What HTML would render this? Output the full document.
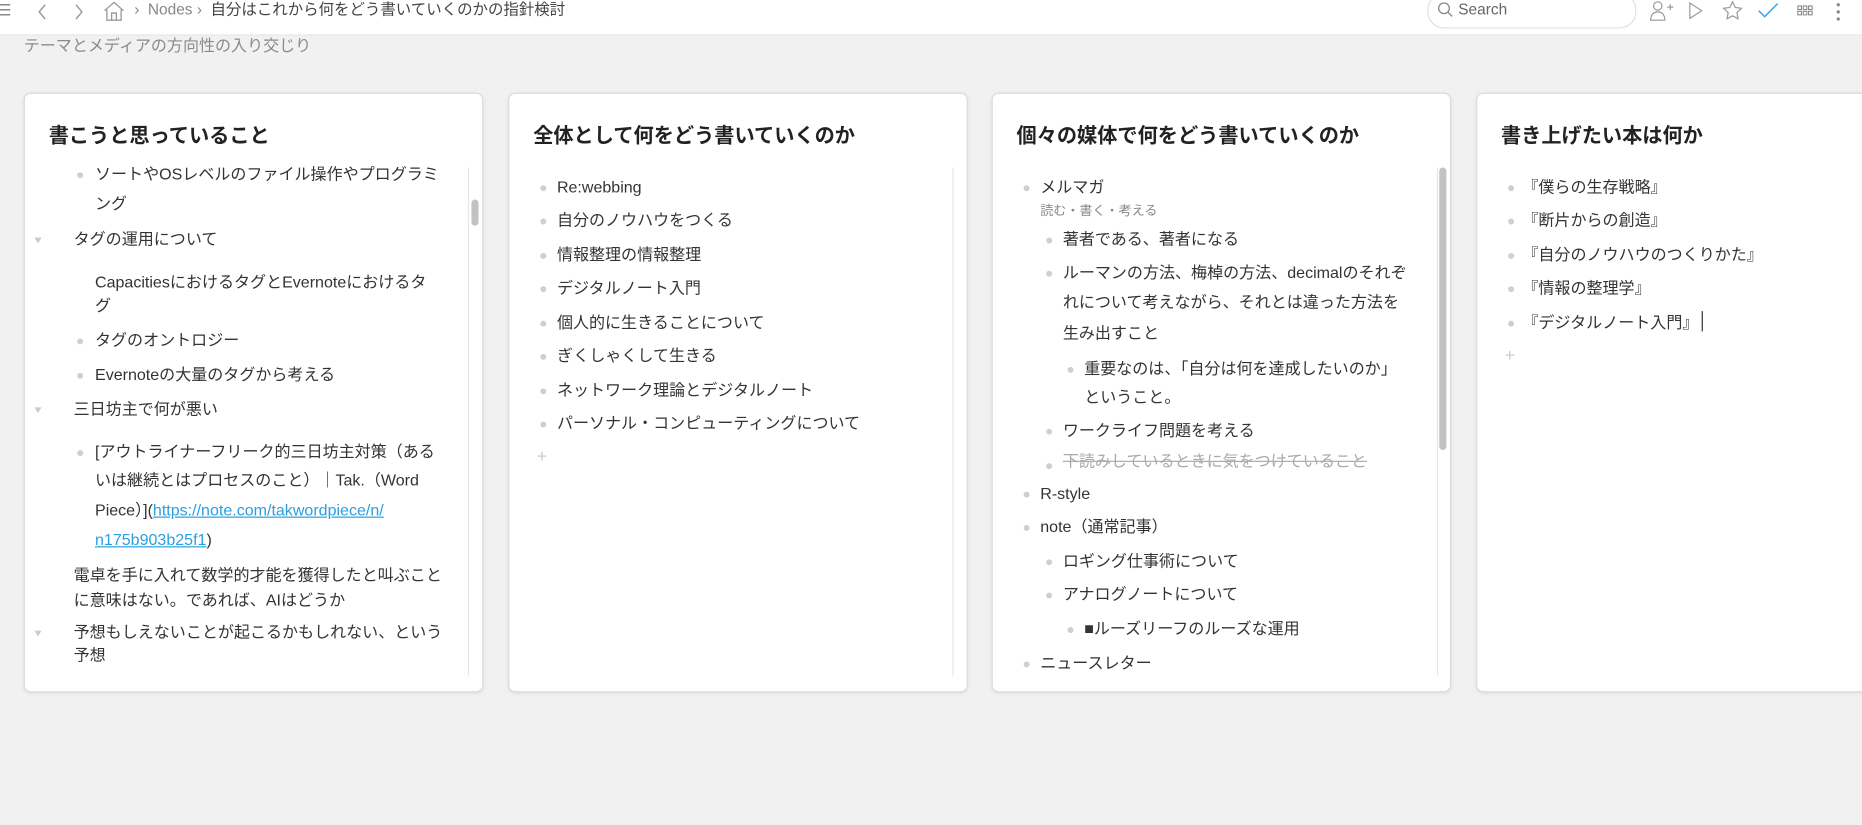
<!DOCTYPE html>
<html><head><meta charset="utf-8"><style>
html,body{margin:0;padding:0;width:1862px;height:825px;overflow:hidden;background:#f0f1f0;}
#s{position:absolute;left:0;top:0;width:1568px;height:695px;transform:scale(1.18750);transform-origin:0 0;font-family:"Liberation Sans","Noto Sans CJK JP",sans-serif;color:#333;}
.hdr{position:absolute;left:0;top:0;width:1568px;height:29px;background:#fff;border-bottom:1px solid #e4e5e5;}
.a{position:absolute;white-space:nowrap;line-height:20px;font-size:13.5px;}
.card{position:absolute;top:78px;width:385px;height:503px;background:#fff;border:1px solid #dcdcdc;border-radius:6px;box-shadow:0 1px 3px rgba(0,0,0,.08);overflow:hidden;}
.card h2{position:absolute;left:20px;top:24px;margin:0;font-size:17px;font-weight:bold;color:#222;line-height:24px;white-space:nowrap;}
.b{position:absolute;width:5px;height:5px;border-radius:50%;background:#cfcfcf;}
.t{position:absolute;width:0;height:0;border-left:3.5px solid transparent;border-right:3.5px solid transparent;border-top:5px solid #ccc;}
.sl{position:absolute;top:62px;width:1px;height:428px;background:#e6e6e6;}
.th{position:absolute;width:6px;border-radius:3px;background:#c2c2c2;}
.pl{position:absolute;color:#ccc;font-size:15px;line-height:16px;}
a{color:#2a9fe0;text-decoration:underline;}
</style></head><body><div id="s">
<div class="hdr">
<div class="a" style="left:-2px;top:-1px;color:#888;font-size:13px">☰</div>
<svg style="position:absolute;left:31px;top:3px" width="10" height="14"><path d="M7 1L2 7l5 6" fill="none" stroke="#999" stroke-width="1.2"/></svg>
<svg style="position:absolute;left:61px;top:3px" width="10" height="14"><path d="M3 1l5 6-5 6" fill="none" stroke="#999" stroke-width="1.2"/></svg>
<svg style="position:absolute;left:86px;top:0px" width="20" height="18"><path d="M2 9L10 2l8 7M4 8v9h12V8M8 17v-6h4v6" fill="none" stroke="#999" stroke-width="1.1"/></svg>
<div class="a" style="left:113px;top:-2px;color:#888;font-size:13px">›&nbsp; Nodes ›&nbsp; <span style="color:#444">自分はこれから何をどう書いていくのかの指針検討</span></div>
<div style="position:absolute;left:1202px;top:-6px;width:174px;height:28px;border:1px solid #e0e0e0;border-radius:14px;background:#fff"></div>
<svg style="position:absolute;left:1210px;top:1px" width="14" height="14"><circle cx="6" cy="6" r="4.5" fill="none" stroke="#888" stroke-width="1.1"/><path d="M9.3 9.3l3.5 3.5" stroke="#888" stroke-width="1.1"/></svg>
<div class="a" style="left:1228px;top:-2px;color:#666;font-size:13px">Search</div>
<svg style="position:absolute;left:1388px;top:0" width="22" height="18"><circle cx="8" cy="5" r="3.5" fill="none" stroke="#999"/><path d="M2 17c0-5 3-7 6-7s6 2 6 7z" fill="none" stroke="#999"/><path d="M16 6h5M18.5 3.5v5" stroke="#999"/></svg>
<svg style="position:absolute;left:1421px;top:1px" width="14" height="16"><path d="M2 1.5l10 6.5-10 6.5z" fill="none" stroke="#999"/></svg>
<svg style="position:absolute;left:1450px;top:0" width="18" height="18"><path d="M9 1.5l2.3 4.8 5.2.7-3.8 3.6.9 5.2L9 13.3l-4.6 2.5.9-5.2L1.5 7l5.2-.7z" fill="none" stroke="#999"/></svg>
<svg style="position:absolute;left:1479px;top:1px" width="20" height="16"><path d="M2 8l5 5 11-11" fill="none" stroke="#3aa8f0" stroke-width="1.3"/></svg>
<svg style="position:absolute;left:1513px;top:4px" width="14" height="10"><g fill="none" stroke="#888" stroke-width=".9"><rect x="1" y="1" width="3" height="3"/><rect x="5.5" y="1" width="3" height="3"/><rect x="10" y="1" width="3" height="3"/><rect x="1" y="5.5" width="3" height="3"/><rect x="5.5" y="5.5" width="3" height="3"/><rect x="10" y="5.5" width="3" height="3"/></g></svg>
<svg style="position:absolute;left:1545px;top:0" width="6" height="20"><circle cx="3" cy="4" r="1.4" fill="#888"/><circle cx="3" cy="10" r="1.4" fill="#888"/><circle cx="3" cy="16" r="1.4" fill="#888"/></svg>
</div>
<div class="a" style="left:20px;top:29px;color:#8a8a8a">テーマとメディアの方向性の入り交じり</div>

<!-- card1 -->
<div class="card" style="left:20px">
<h2>書こうと思っていること</h2>
<div class="sl" style="left:373px"></div><div class="th" style="left:376px;top:89px;height:22px"></div>
<div class="b" style="left:44px;top:66px"></div><div class="a" style="left:59px;top:58px">ソートやOSレベルのファイル操作やプログラミ</div>
<div class="a" style="left:59px;top:83px">ング</div>
<div class="t" style="left:8px;top:121px"></div><div class="a" style="left:41px;top:113px">タグの運用について</div>
<div class="a" style="left:59px;top:149px">CapacitiesにおけるタグとEvernoteにおけるタ</div>
<div class="a" style="left:59px;top:169px">グ</div>
<div class="b" style="left:44px;top:206px"></div><div class="a" style="left:59px;top:198px">タグのオントロジー</div>
<div class="b" style="left:44px;top:235px"></div><div class="a" style="left:59px;top:227px">Evernoteの大量のタグから考える</div>
<div class="t" style="left:8px;top:264px"></div><div class="a" style="left:41px;top:256px">三日坊主で何が悪い</div>
<div class="b" style="left:44px;top:300px"></div><div class="a" style="left:59px;top:292px">[アウトライナーフリーク的三日坊主対策（ある</div>
<div class="a" style="left:59px;top:316px">いは継続とはプロセスのこと）｜Tak.（Word</div>
<div class="a" style="left:59px;top:341px">Piece）](<a>https://note.com/takwordpiece/n/</a></div>
<div class="a" style="left:59px;top:366px"><a>n175b903b25f1</a>)</div>
<div class="a" style="left:41px;top:396px">電卓を手に入れて数学的才能を獲得したと叫ぶこと</div>
<div class="a" style="left:41px;top:417px">に意味はない。であれば、AIはどうか</div>
<div class="t" style="left:8px;top:452px"></div><div class="a" style="left:41px;top:444px">予想もしえないことが起こるかもしれない、という</div>
<div class="a" style="left:41px;top:463px">予想</div>
</div>

<!-- card2 -->
<div class="card" style="left:428px">
<h2>全体として何をどう書いていくのか</h2>
<div class="sl" style="left:373px"></div>
<div class="b" style="left:26px;top:77px"></div><div class="a" style="left:40px;top:69px">Re:webbing</div>
<div class="b" style="left:26px;top:105px"></div><div class="a" style="left:40px;top:97px">自分のノウハウをつくる</div>
<div class="b" style="left:26px;top:134px"></div><div class="a" style="left:40px;top:126px">情報整理の情報整理</div>
<div class="b" style="left:26px;top:162px"></div><div class="a" style="left:40px;top:154px">デジタルノート入門</div>
<div class="b" style="left:26px;top:191px"></div><div class="a" style="left:40px;top:183px">個人的に生きることについて</div>
<div class="b" style="left:26px;top:219px"></div><div class="a" style="left:40px;top:211px">ぎくしゃくして生きる</div>
<div class="b" style="left:26px;top:248px"></div><div class="a" style="left:40px;top:240px">ネットワーク理論とデジタルノート</div>
<div class="b" style="left:26px;top:276px"></div><div class="a" style="left:40px;top:268px">パーソナル・コンピューティングについて</div>
<div class="pl" style="left:23px;top:298px">+</div>
</div>

<!-- card3 -->
<div class="card" style="left:835px">
<h2>個々の媒体で何をどう書いていくのか</h2>
<div class="sl" style="left:374px"></div><div class="th" style="left:376px;top:62px;height:238px"></div>
<div class="b" style="left:26px;top:77px"></div><div class="a" style="left:40px;top:69px">メルマガ</div>
<div class="a" style="left:40px;top:89px;font-size:11px;color:#888">読む・書く・考える</div>
<div class="b" style="left:45px;top:121px"></div><div class="a" style="left:59px;top:113px">著者である、著者になる</div>
<div class="b" style="left:45px;top:149px"></div><div class="a" style="left:59px;top:141px">ルーマンの方法、梅棹の方法、decimalのそれぞ</div>
<div class="a" style="left:59px;top:166px">れについて考えながら、それとは違った方法を</div>
<div class="a" style="left:59px;top:192px">生み出すこと</div>
<div class="b" style="left:63px;top:230px"></div><div class="a" style="left:77px;top:222px">重要なのは、「自分は何を達成したいのか」</div>
<div class="a" style="left:77px;top:246px">ということ。</div>
<div class="b" style="left:45px;top:282px"></div><div class="a" style="left:59px;top:274px">ワークライフ問題を考える</div>
<div class="b" style="left:45px;top:311px"></div><div class="a" style="left:59px;top:300px;color:#aaa;text-decoration:line-through">下読みしているときに気をつけていること</div>
<div class="b" style="left:26px;top:335px"></div><div class="a" style="left:40px;top:327px">R-style</div>
<div class="b" style="left:26px;top:363px"></div><div class="a" style="left:40px;top:355px">note（通常記事）</div>
<div class="b" style="left:45px;top:392px"></div><div class="a" style="left:59px;top:384px">ロギング仕事術について</div>
<div class="b" style="left:45px;top:420px"></div><div class="a" style="left:59px;top:412px">アナログノートについて</div>
<div class="b" style="left:63px;top:449px"></div><div class="a" style="left:77px;top:441px">■ルーズリーフのルーズな運用</div>
<div class="b" style="left:26px;top:478px"></div><div class="a" style="left:40px;top:470px">ニュースレター</div>
</div>

<!-- card4 -->
<div class="card" style="left:1243px;width:400px">
<h2>書き上げたい本は何か</h2>
<div class="b" style="left:26px;top:77px"></div><div class="a" style="left:38px;top:69px">『僕らの生存戦略』</div>
<div class="b" style="left:26px;top:105px"></div><div class="a" style="left:38px;top:97px">『断片からの創造』</div>
<div class="b" style="left:26px;top:134px"></div><div class="a" style="left:38px;top:126px">『自分のノウハウのつくりかた』</div>
<div class="b" style="left:26px;top:162px"></div><div class="a" style="left:38px;top:154px">『情報の整理学』</div>
<div class="b" style="left:26px;top:191px"></div><div class="a" style="left:38px;top:183px">『デジタルノート入門』<span style="display:inline-block;width:1px;height:17px;background:#333;vertical-align:-3px;margin-left:3px"></span></div>
<div class="pl" style="left:23px;top:213px">+</div>
</div>
</div></body></html>
